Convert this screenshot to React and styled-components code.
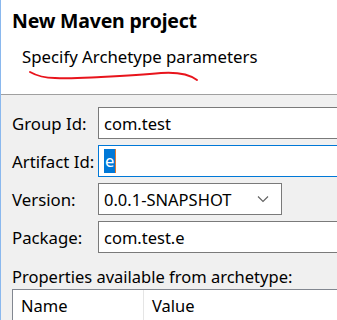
import React from 'react'
import styled, { createGlobalStyle } from 'styled-components'

const Global = createGlobalStyle`
  html, body {
    margin: 0;
    padding: 0;
    background: #f0f0f0;
    overflow: hidden;
  }
  body {
    font-family: 'Noto Sans', 'Open Sans', sans-serif;
    color: #000;
  }
`

const Window = styled.div`
  width: 337px;
  height: 320px;
  overflow: hidden;
  border-left: 1px solid #8ab8ee;
  box-sizing: border-box;
  background: #f0f0f0;
`

const Banner = styled.div`
  height: 95px;
  background: #ffffff;
  border-bottom: 1px solid #a0a0a0;
  box-sizing: border-box;
  padding: 8px 0 0 11px;
  position: relative;
`

const Title = styled.div`
  font-size: 19.5px;
  font-weight: 700;
  line-height: 26px;
  letter-spacing: -0.2px;
`

const Subtitle = styled.div`
  font-size: 16.8px;
  line-height: 22px;
  margin: 12px 0 0 10px;
`

const Scribble = styled.svg`
  position: absolute;
  left: 0;
  top: 0;
  pointer-events: none;
`

const Form = styled.div`
  padding: 12px 0 0 11px;
  display: flex;
  flex-direction: column;
`

const Fields = styled.div`
  display: flex;
  flex-direction: column;
  gap: 6px;
`

const Row = styled.div`
  display: flex;
  align-items: center;
  height: 32px;
`

const Label = styled.div`
  width: 86px;
  font-size: 16.8px;
  flex: none;
`

const Field = styled.div`
  height: 32px;
  box-sizing: border-box;
  background: #fff;
  border: 1px solid ${p => (p.$focused ? '#0078d7' : '#7a7a7a')};
  display: flex;
  align-items: center;
  padding-left: 5px;
  font-size: 16.5px;
  ${p => (p.$width ? `width: ${p.$width}px; flex: none;` : 'flex: 1; margin-right: -20px;')}
`

const Selected = styled.span`
  background: #0078d7;
  color: #fff;
  line-height: 24px;
  padding: 0 1px;
  border-right: 1px solid #e07830;
`

const Chevron = styled.svg`
  margin-left: auto;
  margin-right: 12px;
`

const Caption = styled.div`
  font-size: 16.5px;
  margin-top: 12px;
  line-height: 24px;
`

const Table = styled.div`
  height: 60px;
  margin-right: -20px;
  background: #fff;
  border: 1px solid #828790;
  display: grid;
  grid-template-columns: 131px 1fr;
  align-content: start;
`

const HeadCell = styled.div`
  font-size: 16.5px;
  height: 30px;
  display: flex;
  align-items: center;
  padding-left: 8px;
  border-right: ${p => (p.$last ? 'none' : '1px solid #e5e5e5')};
`

export default function App() {
  return (
    <>
      <Global />
      <Window>
        <Banner>
          <Title>New Maven project</Title>
          <Subtitle>Specify Archetype parameters</Subtitle>
          <Scribble width="220" height="95" viewBox="0 0 220 95">
            <path
              d="M29 72 C36 76 44 78 54 78 C68 79 80 78 100 77 C120 76 140 75 160 73 C175 72 188 74 196 80"
              fill="none"
              stroke="#e8141c"
              strokeWidth="2"
              strokeLinecap="round"
            />
          </Scribble>
        </Banner>
        <Form>
          <Fields>
            <Row>
              <Label>Group Id:</Label>
              <Field>com.test</Field>
            </Row>
            <Row>
              <Label>Artifact Id:</Label>
              <Field $focused>
                <Selected>e</Selected>
              </Field>
            </Row>
            <Row>
              <Label>Version:</Label>
              <Field $width={184}>
                0.0.1-SNAPSHOT
                <Chevron width="12" height="8" viewBox="0 0 12 8">
                  <path d="M1 1.5 L6 6.5 L11 1.5" fill="none" stroke="#606060" strokeWidth="1.1" />
                </Chevron>
              </Field>
            </Row>
            <Row>
              <Label>Package:</Label>
              <Field>com.test.e</Field>
            </Row>
          </Fields>
          <Caption>Properties available from archetype:</Caption>
          <Table>
            <HeadCell>Name</HeadCell>
            <HeadCell $last>Value</HeadCell>
          </Table>
        </Form>
      </Window>
    </>
  )
}
